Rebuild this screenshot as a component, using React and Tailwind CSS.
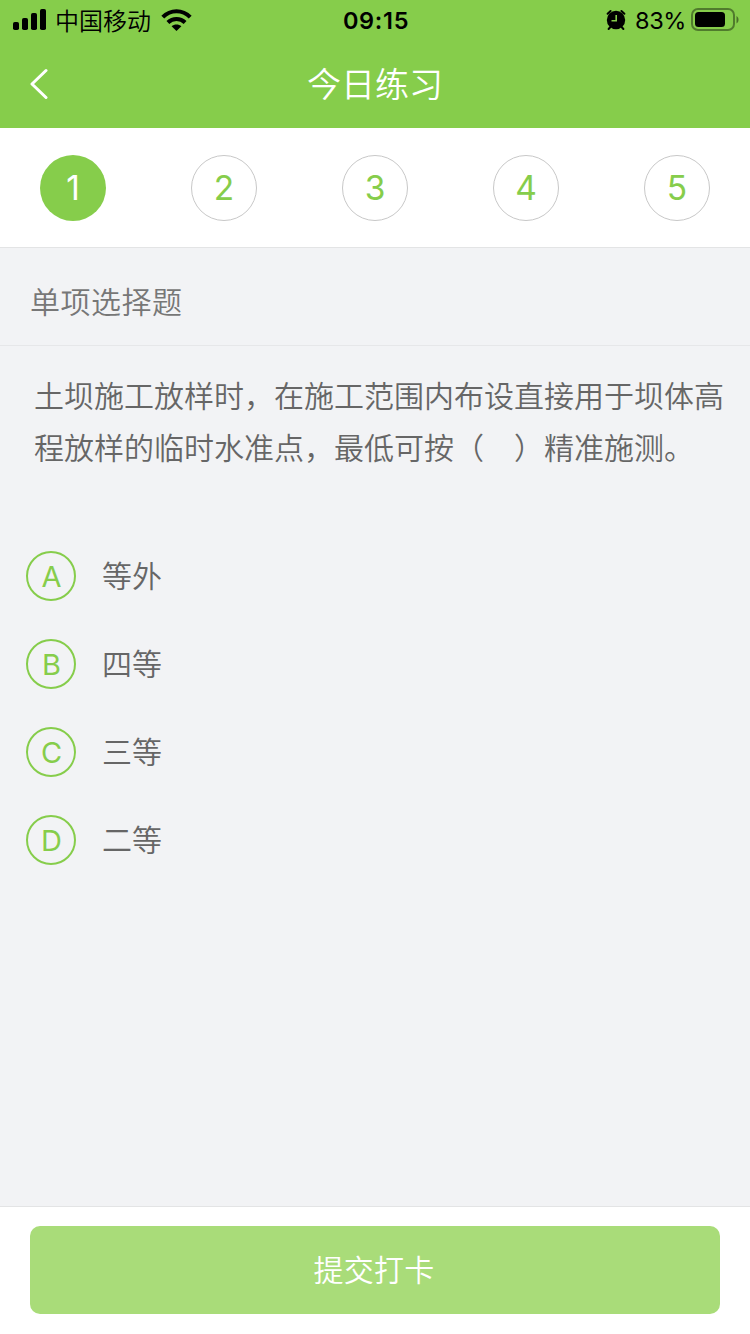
import React, { useState } from "react";

const questions = [1, 2, 3, 4, 5];

const options = [
    { key: "A", label: "等外" },
    { key: "B", label: "四等" },
    { key: "C", label: "三等" },
    { key: "D", label: "二等" },
];

const StatusBar = () => (
    <div className="flex h-10 items-center justify-between pl-[13px] pr-[11px] text-black">
        <div className="flex flex-1 items-center">
            <svg width="34" height="22" viewBox="0 0 34 22" fill="currentColor">
                <rect x="0" y="13" width="6" height="8" rx="1.8" />
                <rect x="9" y="9" width="6" height="12" rx="1.8" />
                <rect x="18" y="4" width="6" height="17" rx="1.8" />
                <rect x="27" y="0" width="6" height="21" rx="1.8" />
            </svg>
            <span className="ml-[8px] pt-[3px] text-[24px] font-[350] leading-[37px]">中国移动</span>
            <svg className="ml-[10px]" width="31" height="22" viewBox="0 0 31 22" fill="none" stroke="currentColor" strokeWidth="4">
                <path d="M1.8 8.2C9.5 .3 21.5 .3 29.2 8.2" />
                <path d="M6.9 13.5C11.7 8.7 19.3 8.7 24.1 13.5" />
                <path d="M15.5 22L10.6 17.3C13.3 14.8 17.7 14.8 20.4 17.3Z" fill="currentColor" stroke="none" />
            </svg>
        </div>
        <span className="pt-[2px] text-[23.5px] font-semibold leading-[38px] tracking-[0.7px]">09:15</span>
        <div className="flex flex-1 items-center justify-end">
            <svg width="20" height="22" viewBox="0 0 20 22">
                <path d="M1.6 4.8L4.6 2M18.4 4.8L15.4 2M4.4 18L2.6 20M15.6 18L17.4 20" stroke="currentColor" strokeWidth="2" strokeLinecap="round" />
                <circle cx="10" cy="11" r="9.2" fill="currentColor" />
                <path d="M10.2 6V11.8H5.5" fill="none" stroke="#86cd4b" strokeWidth="1.6" />
            </svg>
            <span className="ml-[9px] pt-[2px] text-[23.5px] leading-[38px] tracking-[-0.4px]">83%</span>
            <svg className="ml-[5px]" width="48" height="24" viewBox="0 0 48 24">
                <rect x="1" y="1" width="42" height="21" rx="6" fill="none" stroke="currentColor" strokeOpacity=".4" strokeWidth="2" />
                <rect x="4" y="4" width="30" height="15" rx="3.5" fill="currentColor" />
                <path d="M45.5 8v7.5c2.7-1.4 2.7-6.1 0-7.5z" fill="currentColor" fillOpacity=".45" />
            </svg>
        </div>
    </div>
);

const App = () => {
    const [current, setCurrent] = useState(1);

    return (
        <div className="flex h-[1334px] w-[750px] flex-col overflow-hidden bg-[#f2f3f5] font-['Inter','Noto_Sans_CJK_SC',sans-serif]">
            <header className="h-32 bg-[#86cd4b]">
                <StatusBar />
                <div className="grid h-[88px] grid-cols-[1fr_auto_1fr] items-center text-white">
                    <button className="ml-[30px] w-5">
                        <svg width="18" height="32" viewBox="0 0 18 32" fill="none" stroke="currentColor" strokeWidth="3" strokeLinecap="round" strokeLinejoin="round">
                            <path d="M16 2.5L2 16l14 13.5" />
                        </svg>
                    </button>
                    <h1 className="pt-px text-[34px] font-[350] leading-[87px]">今日练习</h1>
                </div>
            </header>

            {/* Nomor soal */}
            <nav className="flex h-[120px] items-center justify-between border-b border-[#e3e4e5] bg-white px-10">
                {questions.map((n) => (
                    <button
                        key={n}
                        onClick={() => setCurrent(n)}
                        className={`flex size-[66px] items-center justify-center rounded-full pt-[2px] text-[33.5px] ${n === current ? "bg-[#86cd4b] text-white" : "border border-[#c8c8c8] text-[#86cd4b]"}`}
                    >
                        {n}
                    </button>
                ))}
            </nav>

            <h2 className="h-[98px] border-b border-[#e6e7e9] pl-[30px] pt-[3px] text-[30px] font-[350] leading-[102px] tracking-[0.5px] text-[#777]">单项选择题</h2>

            <main className="flex-1">
                <p className="pl-[34px] pt-6 text-[30px] font-[350] leading-[52px] text-[#666]">
                    土坝施工放样时，在施工范围内布设直接用于坝体高
                    <br />
                    程放样的临时水准点，最低可按（　）精准施测。
                </p>

                <ul className="mt-[77px] flex flex-col gap-[38px] pl-[26px]">
                    {options.map((o) => (
                        <li key={o.key} className="flex h-[50px] items-center gap-[26px]">
                            <span className="flex size-[50px] items-center justify-center rounded-full border-2 border-[#86cd4b] pl-px pt-[2px] text-[29px] text-[#86cd4b]">{o.key}</span>
                            <span className="text-[30px] font-[350] leading-[50px] text-[#666]">{o.label}</span>
                        </li>
                    ))}
                </ul>
            </main>

            <footer className="h-32 border-t border-[#e3e4e5] bg-white px-[30px] pt-[19px]">
                <button className="h-[88px] w-full rounded-[10px] bg-[#a9dc79] pr-[2px] text-[30px] font-[350] tracking-[0.3px] text-white">提交打卡</button>
            </footer>
        </div>
    );
};
export default App;
